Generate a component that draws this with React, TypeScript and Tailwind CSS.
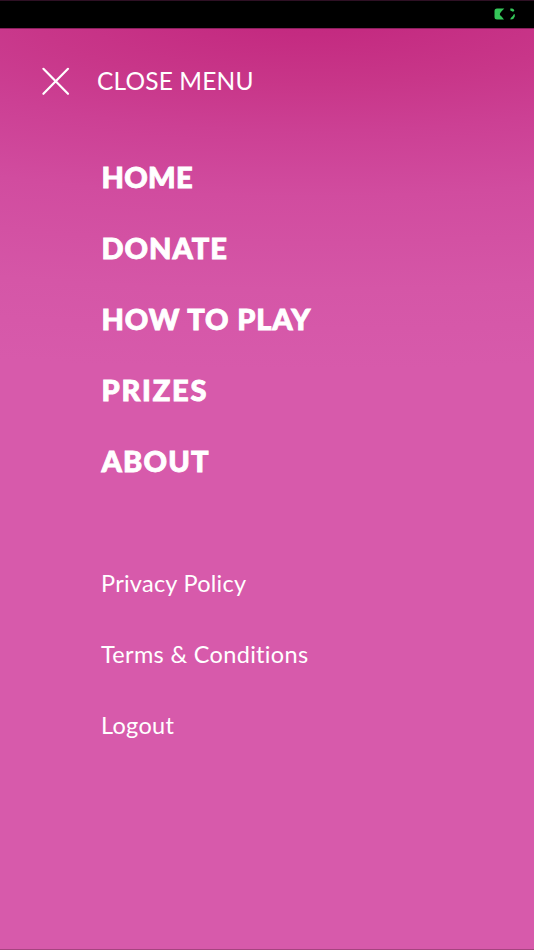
import React from 'react'

interface MenuItem {
  label: string
  className: string
}

const primaryItems: MenuItem[] = [
  { label: 'HOME', className: 'tracking-[0.3px]' },
  { label: 'DONATE', className: 'tracking-[1px]' },
  { label: 'HOW TO PLAY', className: 'tracking-[0.9px]' },
  { label: 'PRIZES', className: 'tracking-[1.8px]' },
  { label: 'ABOUT', className: 'tracking-[1.2px]' },
]

const secondaryItems: MenuItem[] = [
  { label: 'Privacy Policy', className: 'tracking-[0.25px]' },
  { label: 'Terms & Conditions', className: 'tracking-[0.32px]' },
  { label: 'Logout', className: 'tracking-[0.3px]' },
]

function StatusBar() {
  return (
    <div className="h-7 flex-shrink-0 flex justify-end border-t border-[#2e1024] bg-black pr-[18px] pt-[7px]">
      <svg width="22" height="12" viewBox="0 0 22 12" fill="#35c759">
        <path d="M3 0.5H10.3L7.6 3.2Q5.8 5 5.8 6.3Q6 7.5 7.6 8.4L10 11.5H3Q0.5 11.5 0.5 9V3Q0.5 0.5 3 0.5Z" />
        <path d="M16.3 0.6H18.2Q20 0.8 20.4 2.8L19 3.8L16.3 2.4Z" />
        <path d="M19.8 6.2H20.8V8.6Q20.2 11.2 17 11.5L16.2 11.2L17 9.8Q18.8 8.6 19.8 6.2Z" />
      </svg>
    </div>
  )
}

export default function App() {
  return (
    <div className="h-[950px] w-full flex flex-col overflow-hidden bg-black font-['Lato',sans-serif] text-white">
      <StatusBar />
      <div className="flex-1 border-t border-b border-t-[#8a1f5d] border-b-[#a5447f] bg-[radial-gradient(ellipse_1350px_360px_at_310px_-20px,#c3287f_0%,#c42b81_7%,#c83689_21%,#cc4094_34%,#d14c9f_52%,#d556a7_78%,#d75aab_100%)]">
        {/* Close button */}
        <button className="mt-[32px] ml-[41px] flex h-10 items-center gap-[26px]">
          <svg width="30" height="30" viewBox="0 0 30 30" fill="none" stroke="white" strokeWidth="2.2" strokeLinecap="round">
            <path d="M2.4 2.8L27 27.8M27 2.8L2.4 27.8" />
          </svg>
          <span className="text-[24.5px] leading-10 whitespace-nowrap tracking-[0.15px]">CLOSE MENU</span>
        </button>

        {/* Main links */}
        <nav className="mt-[40px] ml-[101.5px] flex flex-col">
          {primaryItems.map((item) => (
            <a key={item.label} className={`h-[71.1px] text-[29px] leading-[71px] font-black whitespace-nowrap [-webkit-text-stroke:0.9px_white] ${item.className}`}>
              {item.label}
            </a>
          ))}
        </nav>

        {/* Secondary links */}
        <nav className="mt-[51.5px] ml-[101px] flex flex-col">
          {secondaryItems.map((item) => (
            <a key={item.label} className={`h-[71.1px] text-[23.5px] leading-[71px] whitespace-nowrap ${item.className}`}>
              {item.label}
            </a>
          ))}
        </nav>
      </div>
    </div>
  )
}
